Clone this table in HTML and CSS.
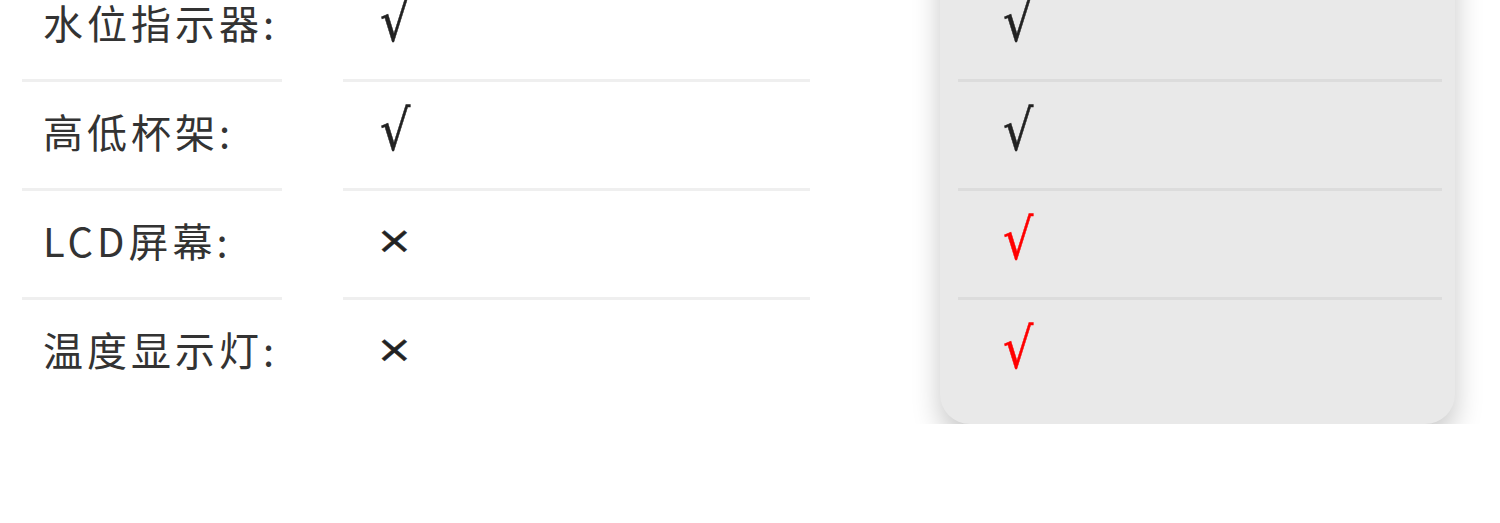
FILE: index.html
```html
<!DOCTYPE html>
<html lang="zh-CN">

<head>
    <meta charset="UTF-8">
    <meta name="viewport" content="width=device-width, initial-scale=1.0">
    <title>功能对比</title>
    <link rel="stylesheet" href="styles.css">
</head>

<body>

    <div class="compare">
        <!-- Feature names -->
        <div class="col labels">
            <div class="row">水位指示器:</div>
            <div class="row">高低杯架:</div>
            <div class="row">LCD屏幕:</div>
            <div class="row last">温度显示灯:</div>
        </div>

        <!-- Other product -->
        <div class="col values">
            <div class="row"><span class="mark">√</span></div>
            <div class="row"><span class="mark">√</span></div>
            <div class="row"><span class="mark cross">×</span></div>
            <div class="row last"><span class="mark cross">×</span></div>
        </div>

        <!-- Our product -->
        <div class="card">
            <div class="row"><span class="mark">√</span></div>
            <div class="row"><span class="mark">√</span></div>
            <div class="row"><span class="mark red">√</span></div>
            <div class="row last"><span class="mark red">√</span></div>
        </div>
    </div>

</body>

</html>
```

FILE: styles.css
```css
* {
    margin: 0;
    padding: 0;
    box-sizing: border-box;
}

body {
    background: #fff;
    overflow: hidden;
    font-family: 'Noto Sans CJK SC', 'Noto Sans', sans-serif;
    color: #333;
}

.compare {
    display: flex;
    align-items: flex-start;
    margin-top: -27px;
    padding-left: 22px;
}

.row {
    height: 109px;
    padding-top: 29px;
    border-bottom: 3px solid #efefef;
    font-size: 40px;
    line-height: 40px;
    white-space: nowrap;
}

.row.last {
    border-bottom: none;
}

.labels {
    width: 260px;
}

.labels .row {
    padding-left: 21px;
    letter-spacing: 4px;
}

.values {
    width: 467px;
    margin-left: 61px;
}

.values .row {
    padding-left: 37px;
}

.mark {
    display: inline-block;
    font-family: 'DejaVu Sans', sans-serif;
    font-size: 56px;
    color: #222;
    -webkit-text-stroke: 0.5px currentColor;
    transform: scaleX(0.85);
    transform-origin: left center;
}

.mark.cross {
    font-size: 38px;
    margin-left: -4px;
    vertical-align: 6px;
    transform: scaleX(1.15);
}

.mark.red {
    color: #ff0000;
}

/* Highlighted column */
.card {
    width: 515px;
    margin-left: 130px;
    margin-top: -60px;
    padding: 60px 13px 15px 18px;
    background: #e9e9e9;
    border-radius: 30px;
    box-shadow: 0 14px 28px rgba(0, 0, 0, 0.22);
}

.card .row {
    padding-left: 45px;
    border-bottom-color: #dcdcdc;
}
```
